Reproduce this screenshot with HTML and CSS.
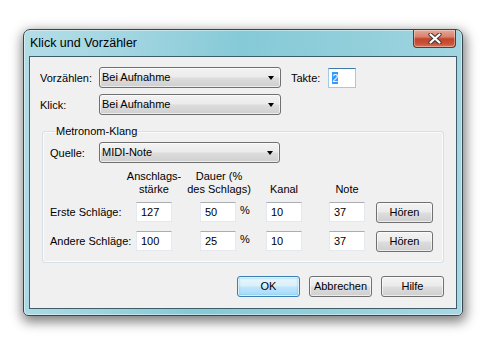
FILE: index.html
```html
<!DOCTYPE html>
<html lang="de">
<head>
    <meta charset="UTF-8">
    <title>Klick und Vorzähler</title>
    <link rel="stylesheet" href="styles.css">
</head>
<body>
    <div class="window">
        <div class="titlebar">
            <span class="title">Klick und Vorzähler</span>
            <div class="close">
                <svg width="14" height="11" viewBox="0 0 14 11">
                    <path d="M2.5 1.5 L11.5 9.5 M11.5 1.5 L2.5 9.5" stroke="#3b3b3b" stroke-width="4.2" stroke-linecap="round"/>
                    <path d="M2.5 1.5 L11.5 9.5 M11.5 1.5 L2.5 9.5" stroke="#fff" stroke-width="2.2" stroke-linecap="round"/>
                </svg>
            </div>
        </div>

        <div class="client">
            <div class="row">
                <span class="label top-label">Vorzählen:</span>
                <div class="combo wide">Bei Aufnahme<span class="arrow"></span></div>
                <span class="label takte-label">Takte:</span>
                <div class="edit takte"><span class="selected">2</span></div>
            </div>
            <div class="row second">
                <span class="label top-label">Klick:</span>
                <div class="combo wide">Bei Aufnahme<span class="arrow"></span></div>
            </div>

            <fieldset class="group">
                <legend>Metronom-Klang</legend>
                <div class="row">
                    <span class="label source-label">Quelle:</span>
                    <div class="combo source">MIDI-Note<span class="arrow"></span></div>
                </div>

                <div class="beats">
                    <div class="head c-vel">Anschlags-<br>stärke</div>
                    <div class="head c-dur-head">Dauer (%<br>des Schlags)</div>
                    <div class="head c-chan low">Kanal</div>
                    <div class="head c-note low">Note</div>

                    <span class="label r1 c-label">Erste Schläge:</span>
                    <div class="edit r1 c-vel">127</div>
                    <div class="edit r1 c-dur">50</div>
                    <span class="percent r1">%</span>
                    <div class="edit r1 c-chan">10</div>
                    <div class="edit r1 c-note">37</div>
                    <div class="btn r1 c-btn">Hören</div>

                    <span class="label r2 c-label">Andere Schläge:</span>
                    <div class="edit r2 c-vel">100</div>
                    <div class="edit r2 c-dur">25</div>
                    <span class="percent r2">%</span>
                    <div class="edit r2 c-chan">10</div>
                    <div class="edit r2 c-note">37</div>
                    <div class="btn r2 c-btn">Hören</div>
                </div>
            </fieldset>

            <div class="actions">
                <div class="btn default">OK</div>
                <div class="btn">Abbrechen</div>
                <div class="btn">Hilfe</div>
            </div>
        </div>
    </div>
</body>
</html>
```

FILE: styles.css
```css
body {
    margin: 0;
    width: 496px;
    height: 352px;
    background: #fff;
    font-family: "Liberation Sans", Arial, sans-serif;
    font-size: 11px;
    color: #000;
    overflow: hidden;
}

.window {
    margin: 29px 0 0 23px;
    width: 428px;
    border: 1px solid #39474d;
    border-radius: 7px 7px 5px 5px;
    background: linear-gradient(100deg, #b3dde7 0%, #a3d6e1 20%, #86cad7 45%, #92cfdb 70%, #a8d8e3 100%);
    box-shadow: 1px 4px 12px 2px rgba(0, 0, 0, 0.5), inset 0 0 0 1px rgba(255, 255, 255, 0.45);
    padding: 0 5px 6px 5px;
}

.titlebar {
    height: 26px;
    display: flex;
    justify-content: space-between;
    align-items: flex-start;
}

.title {
    font-size: 12.5px;
    margin: 6px 0 0 1px;
    color: #000;
}

.close {
    width: 41px;
    height: 17px;
    margin-right: 1px;
    border: 1px solid #6e3328;
    border-top: none;
    border-radius: 0 0 4px 4px;
    background: linear-gradient(to bottom, #e6a898 0%, #d9826d 40%, #c5442c 52%, #c9513a 80%, #d9765b 100%);
    box-shadow: inset 0 0 0 1px rgba(255, 255, 255, 0.35);
    display: flex;
    justify-content: center;
    align-items: center;
}

.client {
    background: #f0f0f0;
    border: 1px solid #3f5d68;
    padding: 10px 11px 11px 10px;
}

.row {
    display: flex;
    align-items: center;
}

.row.second {
    margin-top: 6px;
}

.top-label {
    width: 59px;
}

.source-label {
    width: 49px;
}

.takte-label {
    margin: 0 8px 0 10px;
}

.combo {
    position: relative;
    height: 19px;
    line-height: 19px;
    padding-left: 2px;
    border: 1px solid #707070;
    border-radius: 3px;
    background: linear-gradient(to bottom, #f3f3f3 0%, #ebebeb 48%, #dddddd 52%, #cfcfcf 100%);
    box-shadow: inset 0 0 0 1px rgba(255, 255, 255, 0.6);
}

.combo.wide {
    width: 178px;
}

.combo.source {
    width: 177px;
}

.arrow {
    position: absolute;
    right: 6px;
    top: 8px;
    border-top: 4px solid #000;
    border-left: 3.5px solid transparent;
    border-right: 3.5px solid transparent;
}

.edit {
    height: 18px;
    line-height: 18px;
    padding-left: 4px;
    background: #fff;
    border: 1px solid #e3e9ef;
    border-top-color: #abadb3;
}

.edit.takte {
    width: 23px;
    padding-left: 3px;
    border-color: #a4c9e3;
    border-top-color: #3d7bad;
}

.selected {
    background: #3399ff;
    color: #fff;
}

.group {
    margin: 10px 11px 0 2px;
    padding: 4px 10px 11px 7px;
    border: 1px solid #d5dfe5;
    border-radius: 3px;
    box-shadow: inset 0 0 0 1px rgba(255, 255, 255, 0.7);
}

.group legend {
    margin-left: 5px;
    padding: 0 1px;
    line-height: 13px;
}

.beats {
    display: grid;
    grid-template-columns: 86px 36px 28px 36px 30px 36px 27px 36px 11px 57px;
    grid-template-rows: 26px 6px 20px 9px 20px;
    align-items: center;
    margin-top: 7px;
}

.beats .head {
    grid-row: 1;
    justify-self: center;
    align-self: start;
    text-align: center;
    white-space: nowrap;
    line-height: 13px;
}

.beats .head.low {
    align-self: end;
}

.r1 {
    grid-row: 3;
}

.r2 {
    grid-row: 5;
}

.c-label {
    grid-column: 1;
}

.c-vel {
    grid-column: 2;
}

.c-dur {
    grid-column: 4;
}

.c-dur-head {
    grid-column: 3 / 6;
}

.c-chan {
    grid-column: 6;
}

.c-note {
    grid-column: 8;
}

.c-btn {
    grid-column: 10;
}

.beats .edit {
    width: 30px;
}

.percent {
    grid-column: 5;
    padding-left: 4px;
    align-self: start;
    line-height: 16px;
}

.btn {
    height: 19px;
    line-height: 19px;
    text-align: center;
    border: 1px solid #707070;
    border-radius: 3px;
    background: linear-gradient(to bottom, #f3f3f3 0%, #ebebeb 48%, #dddddd 52%, #cfcfcf 100%);
    box-shadow: inset 0 0 0 1px rgba(255, 255, 255, 0.6);
}

.actions {
    display: flex;
    justify-content: flex-end;
    gap: 9px;
    margin: 13px 1px 0 0;
}

.actions .btn {
    width: 61px;
}

.btn.default {
    border-color: #3c7fb1;
    background: linear-gradient(to bottom, #eaf6fd 0%, #d9f0fc 48%, #bee6fd 52%, #a7d9f5 100%);
    box-shadow: inset 0 0 0 1px rgba(255, 255, 255, 0.7), inset 0 0 2px 1px #6cc4ee;
}
```
